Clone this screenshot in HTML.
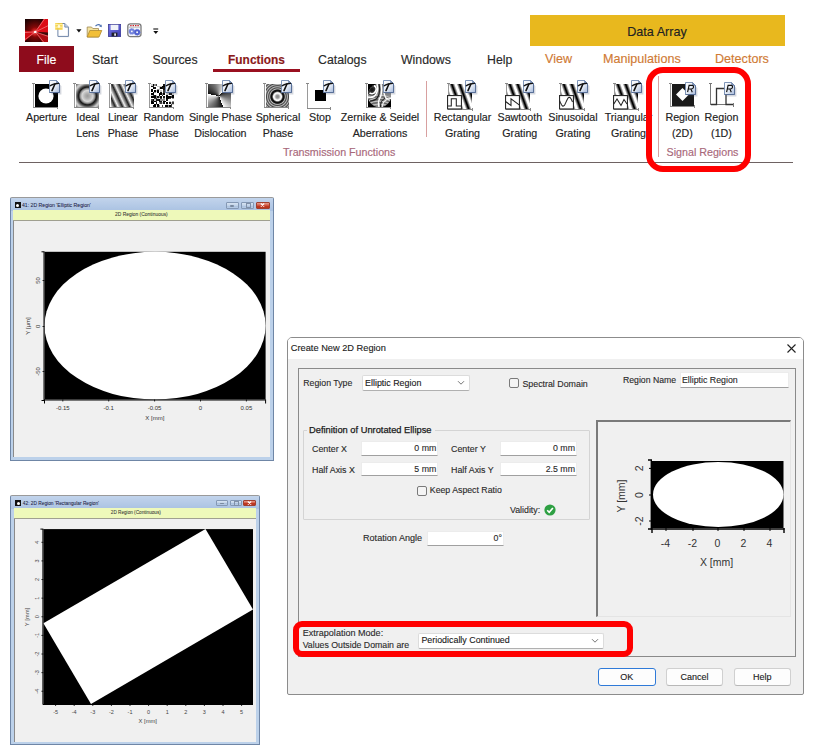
<!DOCTYPE html>
<html><head><meta charset="utf-8"><style>
html,body{margin:0;padding:0;}
body{width:814px;height:754px;position:relative;overflow:hidden;background:#fff;font-family:"Liberation Sans",sans-serif;}
.a{position:absolute;}
.t{position:absolute;white-space:nowrap;}
.t{-webkit-text-stroke:0.15px currentColor;}
.sm{-webkit-text-stroke:0.05px currentColor !important;}
.dl .t{-webkit-text-stroke:0.12px currentColor;}
svg{display:block;}
</style></head><body>
<svg width="0" height="0" style="position:absolute"><defs><linearGradient id="bg" x1="0" y1="0" x2="1" y2="1"><stop offset="0" stop-color="#ffffff"/><stop offset="0.55" stop-color="#e4ebf6"/><stop offset="1" stop-color="#a4b8da"/></linearGradient></defs></svg>
<svg class="a" style="left:24.8px;top:18.8px" width="23.5" height="23.5" viewBox="0 0 23.5 23.5">
<defs><radialGradient id="lg" cx="0.44" cy="0.55" r="0.75"><stop offset="0" stop-color="#e01818"/><stop offset="0.3" stop-color="#800808"/><stop offset="0.75" stop-color="#2a0404"/><stop offset="1" stop-color="#0a0000"/></radialGradient>
<radialGradient id="lg2" cx="0.44" cy="0.55" r="0.5"><stop offset="0" stop-color="#fff" stop-opacity="0.9"/><stop offset="0.25" stop-color="#ff8080" stop-opacity="0.4"/><stop offset="1" stop-color="#f00" stop-opacity="0"/></radialGradient></defs>
<rect width="23.5" height="23.5" fill="url(#lg)"/>
<path d="M10.3 12.9 L18.5 0 L23.5 0 L23.5 14 Z" fill="#dc0c16"/>
<path d="M10.3 12.9 L0 11.5 L0 22 Z" fill="#d00a14"/>
<path d="M10.3 12.9 L23.5 16.5 L23.5 23.5 L17.5 23.5 Z" fill="#b00a10"/>
<path d="M10.3 12.9 L23.5 13.5 L23.5 16 Z" fill="#3a0a08"/>
<path d="M10.3 12.9 L19.5 0 M10.3 12.9 L23.5 6.5 M10.3 12.9 L0 20.5 M10.3 12.9 L23.5 17.5 M10.3 12.9 L19 23.5 M10.3 12.9 L0 13.5" stroke="#ffb0b0" stroke-width="0.7" opacity="0.75"/>
<circle cx="10.3" cy="12.9" r="5" fill="url(#lg2)"/>
<circle cx="10.3" cy="12.9" r="1.2" fill="#fff"/>
</svg>
<svg class="a" style="left:54px;top:22px" width="17" height="17" viewBox="0 0 17 17">
<path d="M4 1.5 H11 L14.5 5 V14.5 H4 Z" fill="#000" opacity="0.12" transform="translate(0.7,0.7)"/>
<path d="M3.9 1.5 H10.8 L14.4 5.1 V14.4 H3.9 Z" fill="#fff" stroke="#6f86a8" stroke-width="1"/>
<path d="M10.8 1.5 V5.1 H14.4" fill="#c8d4e8" stroke="#6f86a8" stroke-width="0.9"/>
<rect x="1.2" y="1" width="7.4" height="6.8" fill="#f6d040" opacity="0.9"/>
<path d="M1.2 2.6 H8.6 M1.2 5.2 H8.6" stroke="#fff4b0" stroke-width="0.9"/>
<circle cx="4.9" cy="4.4" r="1.3" fill="#fffbe0"/>
</svg>
<svg class="a" style="left:75.5px;top:28.5px" width="6" height="4"><path d="M0.3 0.3 H5.5 L2.9 3.5 Z" fill="#111"/></svg>
<svg class="a" style="left:86px;top:22.5px" width="17" height="15" viewBox="0 0 17 15">
<path d="M1.2 4 H5.5 L6.8 5.5 H12.5 V14 H1.2 Z" fill="#f3e3a0" stroke="#a08850" stroke-width="0.8"/>
<path d="M1.2 14 L3.8 7.5 H15.8 L13 14 Z" fill="#f2bf38" stroke="#b08a30" stroke-width="0.8"/>
<path d="M9.5 3.2 Q12 0.3 14.8 2.6" fill="none" stroke="#4a70b0" stroke-width="1.2"/>
<path d="M13.2 3.6 L15.8 4.2 L15.6 1.6 Z" fill="#4a70b0"/>
</svg>
<svg class="a" style="left:108px;top:24px" width="13.3" height="13" viewBox="0 0 13.3 13">
<defs><linearGradient id="fl" x1="0" y1="0" x2="1" y2="1"><stop offset="0" stop-color="#7a7aea"/><stop offset="1" stop-color="#3a3ab0"/></linearGradient></defs>
<rect x="0.4" y="0.4" width="12.5" height="12.2" fill="url(#fl)" stroke="#3a3a90" stroke-width="0.8"/>
<rect x="2.6" y="0.8" width="7.8" height="5.2" fill="#f0f2f8"/>
<rect x="3.6" y="8.6" width="5.8" height="3.8" fill="#202028"/>
<rect x="6.2" y="9.4" width="1.8" height="2.4" fill="#dde"/>
</svg>
<svg class="a" style="left:127px;top:23px" width="15" height="14.5" viewBox="0 0 15 14.5">
<rect x="0.8" y="0.8" width="13.2" height="12.8" rx="2.5" fill="#f4f6fc" stroke="#7a7a7a" stroke-width="1.3"/>
<path d="M3.2 2.6 H4.6 M5.6 2.6 H7 M8 2.6 H9.4 M10.4 2.6 H11.8" stroke="#d02020" stroke-width="1.4"/>
<path d="M1.6 4.2 H13.2" stroke="#999" stroke-width="0.6"/>
<circle cx="4.8" cy="8.4" r="2.9" fill="#7080dc" stroke="#8a96e0" stroke-width="1" stroke-dasharray="0.9 0.9"/>
<circle cx="4.8" cy="8.4" r="0.9" fill="#f4f6fc"/>
<circle cx="10.1" cy="9.3" r="3" fill="#5060d0" stroke="#7080d8" stroke-width="1" stroke-dasharray="0.9 0.9"/>
<circle cx="10.1" cy="9.3" r="1" fill="#f4f6fc"/>
</svg>
<svg class="a" style="left:153px;top:27.5px" width="6" height="6.5"><path d="M0.3 1 H5.2" stroke="#111" stroke-width="1.1"/><path d="M0.3 3 H5.3 L2.8 5.9 Z" fill="#111"/></svg>
<div class="a" style="left:530px;top:15px;width:255px;height:31px;background:#e8b81e;"></div>
<div class="t" style="top:25.83px;font-size:12.6px;line-height:12.6px;color:#222;left:507.00px;width:300px;text-align:center;">Data Array</div>
<div class="a" style="left:19px;top:46px;width:55px;height:26px;background:#8e0c1c;"></div>
<div class="t" style="top:53.59px;font-size:12.3px;line-height:12.3px;color:#fff;left:-103.50px;width:300px;text-align:center;">File</div>
<div class="t" style="top:53.59px;font-size:12.3px;line-height:12.3px;color:#2a2a2a;left:92.00px;">Start</div>
<div class="t" style="top:53.59px;font-size:12.3px;line-height:12.3px;color:#2a2a2a;left:152.50px;">Sources</div>
<div class="t" style="top:53.59px;font-size:12.3px;line-height:12.3px;color:#2a2a2a;left:318.00px;">Catalogs</div>
<div class="t" style="top:53.59px;font-size:12.3px;line-height:12.3px;color:#2a2a2a;left:401.00px;">Windows</div>
<div class="t" style="top:53.59px;font-size:12.3px;line-height:12.3px;color:#2a2a2a;left:487.00px;">Help</div>
<div class="t" style="top:54.53px;font-size:11.9px;line-height:11.9px;color:#8b1a1a;font-weight:bold;left:106.50px;width:300px;text-align:center;">Functions</div>
<div class="a" style="left:213px;top:69px;width:87px;height:3px;background:#9a1020;"></div>
<div class="t" style="top:53.33px;font-size:12.6px;line-height:12.6px;color:#d07a35;left:545.00px;">View</div>
<div class="t" style="top:53.33px;font-size:12.6px;line-height:12.6px;color:#d07a35;left:603.00px;">Manipulations</div>
<div class="t" style="top:53.33px;font-size:12.6px;line-height:12.6px;color:#d07a35;left:715.00px;">Detectors</div>
<div class="t" style="top:111.94px;font-size:10.7px;line-height:10.7px;color:#222;left:-103.50px;width:300px;text-align:center;">Aperture</div>
<div class="t" style="top:111.94px;font-size:10.7px;line-height:10.7px;color:#222;left:-62.20px;width:300px;text-align:center;">Ideal</div>
<div class="t" style="top:127.94px;font-size:10.7px;line-height:10.7px;color:#222;left:-62.20px;width:300px;text-align:center;">Lens</div>
<div class="t" style="top:111.94px;font-size:10.7px;line-height:10.7px;color:#222;left:-27.20px;width:300px;text-align:center;">Linear</div>
<div class="t" style="top:127.94px;font-size:10.7px;line-height:10.7px;color:#222;left:-27.20px;width:300px;text-align:center;">Phase</div>
<div class="t" style="top:111.94px;font-size:10.7px;line-height:10.7px;color:#222;left:13.60px;width:300px;text-align:center;">Random</div>
<div class="t" style="top:127.94px;font-size:10.7px;line-height:10.7px;color:#222;left:13.60px;width:300px;text-align:center;">Phase</div>
<div class="t" style="top:111.94px;font-size:10.7px;line-height:10.7px;color:#222;left:70.40px;width:300px;text-align:center;">Single Phase</div>
<div class="t" style="top:127.94px;font-size:10.7px;line-height:10.7px;color:#222;left:70.40px;width:300px;text-align:center;">Dislocation</div>
<div class="t" style="top:111.94px;font-size:10.7px;line-height:10.7px;color:#222;left:128.00px;width:300px;text-align:center;">Spherical</div>
<div class="t" style="top:127.94px;font-size:10.7px;line-height:10.7px;color:#222;left:128.00px;width:300px;text-align:center;">Phase</div>
<div class="t" style="top:111.94px;font-size:10.7px;line-height:10.7px;color:#222;left:170.00px;width:300px;text-align:center;">Stop</div>
<div class="t" style="top:111.94px;font-size:10.7px;line-height:10.7px;color:#222;left:230.00px;width:300px;text-align:center;">Zernike &amp; Seidel</div>
<div class="t" style="top:127.94px;font-size:10.7px;line-height:10.7px;color:#222;left:230.00px;width:300px;text-align:center;">Aberrations</div>
<div class="t" style="top:111.94px;font-size:10.7px;line-height:10.7px;color:#222;left:312.50px;width:300px;text-align:center;">Rectangular</div>
<div class="t" style="top:127.94px;font-size:10.7px;line-height:10.7px;color:#222;left:312.50px;width:300px;text-align:center;">Grating</div>
<div class="t" style="top:111.94px;font-size:10.7px;line-height:10.7px;color:#222;left:369.80px;width:300px;text-align:center;">Sawtooth</div>
<div class="t" style="top:127.94px;font-size:10.7px;line-height:10.7px;color:#222;left:369.80px;width:300px;text-align:center;">Grating</div>
<div class="t" style="top:111.94px;font-size:10.7px;line-height:10.7px;color:#222;left:423.00px;width:300px;text-align:center;">Sinusoidal</div>
<div class="t" style="top:127.94px;font-size:10.7px;line-height:10.7px;color:#222;left:423.00px;width:300px;text-align:center;">Grating</div>
<div class="t" style="top:111.94px;font-size:10.7px;line-height:10.7px;color:#222;left:478.50px;width:300px;text-align:center;">Triangular</div>
<div class="t" style="top:127.94px;font-size:10.7px;line-height:10.7px;color:#222;left:478.50px;width:300px;text-align:center;">Grating</div>
<div class="t" style="top:111.94px;font-size:10.7px;line-height:10.7px;color:#222;left:532.40px;width:300px;text-align:center;">Region</div>
<div class="t" style="top:127.94px;font-size:10.7px;line-height:10.7px;color:#222;left:532.40px;width:300px;text-align:center;">(2D)</div>
<div class="t" style="top:111.94px;font-size:10.7px;line-height:10.7px;color:#222;left:571.50px;width:300px;text-align:center;">Region</div>
<div class="t" style="top:127.94px;font-size:10.7px;line-height:10.7px;color:#222;left:571.50px;width:300px;text-align:center;">(1D)</div>
<div class="t" style="top:147.24px;font-size:10.7px;line-height:10.7px;color:#a8687a;left:189.20px;width:300px;text-align:center;">Transmission Functions</div>
<div class="t" style="top:147.24px;font-size:10.7px;line-height:10.7px;color:#a8687a;left:552.50px;width:300px;text-align:center;">Signal Regions</div>
<div class="a" style="left:426px;top:81px;width:1px;height:56px;background:#d8a0a0;"></div>
<div class="a" style="left:658px;top:76px;width:1px;height:81px;background:#d8a0a0;"></div>
<div class="a" style="left:19px;top:162px;width:774px;height:1px;background:#6e6262;"></div>
<div class="a" style="left:33px;top:83px;width:1px;height:24px;background:#9a9a9a;"></div><div class="a" style="left:32px;top:83px;width:3px;height:1px;background:#888;"></div><div class="a" style="left:33px;top:107px;width:25px;height:1px;background:#888;"></div><div class="a" style="left:57px;top:106px;width:1px;height:3px;background:#888;"></div>
<svg class="a" style="left:34.5px;top:84px" width="23" height="23"><rect width="23" height="23" fill="#000"/><circle cx="11" cy="12" r="7.6" fill="#fff"/></svg>
<svg class="a" style="left:48.5px;top:80px" width="13" height="15" viewBox="0 0 13 15">
<path d="M1.5 1.5 H8 L11.5 5 V13.5 H1.5 Z" fill="#3a4a68" opacity="0.22" transform="translate(0.9,0.9)"/>
<path d="M0.5 0.5 H7.5 L10.5 3.5 V12.5 H0.5 Z" fill="url(#bg)" stroke="#7189b0" stroke-width="0.9"/>
<path d="M0.5 12.5 H10.5 V3.5" fill="none" stroke="#566c94" stroke-width="0.9"/>
<path d="M7.5 0.5 L10.5 3.5 H7.5 Z" fill="#7a92b8" stroke="#6a80a8" stroke-width="0.6"/>
<path d="M1.2 5.8 Q4 3.7 9.6 3.4" stroke="#111" stroke-width="1.25" fill="none" stroke-linecap="round"/><path d="M5.9 4 Q4.6 7.2 3 10.6" stroke="#111" stroke-width="1.6" fill="none" stroke-linecap="round"/></svg>
<div class="a" style="left:74px;top:83px;width:1px;height:24px;background:#9a9a9a;"></div><div class="a" style="left:73px;top:83px;width:3px;height:1px;background:#888;"></div><div class="a" style="left:74px;top:107px;width:25px;height:1px;background:#888;"></div><div class="a" style="left:98px;top:106px;width:1px;height:3px;background:#888;"></div>
<div class="a" style="left:75.5px;top:84px;width:23px;height:23px;background:radial-gradient(circle at 50% 52%,#9a9a9a 0,#b0b0b0 2.5px,#d8d8d8 5.5px,#909090 7.3px,#181818 8.8px,#404040 10px,#c0c0c0 12.5px,#d0d0d0 13.5px,#707070 16px);"></div>
<svg class="a" style="left:88.5px;top:80px" width="13" height="15" viewBox="0 0 13 15">
<path d="M1.5 1.5 H8 L11.5 5 V13.5 H1.5 Z" fill="#3a4a68" opacity="0.22" transform="translate(0.9,0.9)"/>
<path d="M0.5 0.5 H7.5 L10.5 3.5 V12.5 H0.5 Z" fill="url(#bg)" stroke="#7189b0" stroke-width="0.9"/>
<path d="M0.5 12.5 H10.5 V3.5" fill="none" stroke="#566c94" stroke-width="0.9"/>
<path d="M7.5 0.5 L10.5 3.5 H7.5 Z" fill="#7a92b8" stroke="#6a80a8" stroke-width="0.6"/>
<path d="M1.2 5.8 Q4 3.7 9.6 3.4" stroke="#111" stroke-width="1.25" fill="none" stroke-linecap="round"/><path d="M5.9 4 Q4.6 7.2 3 10.6" stroke="#111" stroke-width="1.6" fill="none" stroke-linecap="round"/></svg>
<div class="a" style="left:109px;top:83px;width:1px;height:24px;background:#9a9a9a;"></div><div class="a" style="left:108px;top:83px;width:3px;height:1px;background:#888;"></div><div class="a" style="left:109px;top:107px;width:25px;height:1px;background:#888;"></div><div class="a" style="left:133px;top:106px;width:1px;height:3px;background:#888;"></div>
<div class="a" style="left:110.5px;top:84px;width:23px;height:23px;background:repeating-linear-gradient(65deg,#f0f0f0 0px,#222 4px,#f0f0f0 6.5px);"></div>
<svg class="a" style="left:124.5px;top:80px" width="13" height="15" viewBox="0 0 13 15">
<path d="M1.5 1.5 H8 L11.5 5 V13.5 H1.5 Z" fill="#3a4a68" opacity="0.22" transform="translate(0.9,0.9)"/>
<path d="M0.5 0.5 H7.5 L10.5 3.5 V12.5 H0.5 Z" fill="url(#bg)" stroke="#7189b0" stroke-width="0.9"/>
<path d="M0.5 12.5 H10.5 V3.5" fill="none" stroke="#566c94" stroke-width="0.9"/>
<path d="M7.5 0.5 L10.5 3.5 H7.5 Z" fill="#7a92b8" stroke="#6a80a8" stroke-width="0.6"/>
<path d="M1.2 5.8 Q4 3.7 9.6 3.4" stroke="#111" stroke-width="1.25" fill="none" stroke-linecap="round"/><path d="M5.9 4 Q4.6 7.2 3 10.6" stroke="#111" stroke-width="1.6" fill="none" stroke-linecap="round"/></svg>
<div class="a" style="left:149px;top:83px;width:1px;height:24px;background:#9a9a9a;"></div><div class="a" style="left:148px;top:83px;width:3px;height:1px;background:#888;"></div><div class="a" style="left:149px;top:107px;width:25px;height:1px;background:#888;"></div><div class="a" style="left:173px;top:106px;width:1px;height:3px;background:#888;"></div>
<svg class="a" style="left:150.5px;top:84px" width="23" height="23" shape-rendering="crispEdges"><rect x="0.00" y="0.00" width="1.83" height="1.83" fill="rgb(200,200,200)"/><rect x="0.00" y="1.53" width="1.83" height="1.83" fill="rgb(20,20,20)"/><rect x="0.00" y="3.07" width="1.83" height="1.83" fill="rgb(255,255,255)"/><rect x="0.00" y="4.60" width="1.83" height="1.83" fill="rgb(0,0,0)"/><rect x="0.00" y="6.13" width="1.83" height="1.83" fill="rgb(0,0,0)"/><rect x="0.00" y="7.67" width="1.83" height="1.83" fill="rgb(255,255,255)"/><rect x="0.00" y="9.20" width="1.83" height="1.83" fill="rgb(0,0,0)"/><rect x="0.00" y="10.73" width="1.83" height="1.83" fill="rgb(200,200,200)"/><rect x="0.00" y="12.27" width="1.83" height="1.83" fill="rgb(0,0,0)"/><rect x="0.00" y="13.80" width="1.83" height="1.83" fill="rgb(255,255,255)"/><rect x="0.00" y="15.33" width="1.83" height="1.83" fill="rgb(60,60,60)"/><rect x="0.00" y="16.87" width="1.83" height="1.83" fill="rgb(0,0,0)"/><rect x="0.00" y="18.40" width="1.83" height="1.83" fill="rgb(0,0,0)"/><rect x="0.00" y="19.93" width="1.83" height="1.83" fill="rgb(255,255,255)"/><rect x="0.00" y="21.47" width="1.83" height="1.83" fill="rgb(255,255,255)"/><rect x="1.53" y="0.00" width="1.83" height="1.83" fill="rgb(0,0,0)"/><rect x="1.53" y="1.53" width="1.83" height="1.83" fill="rgb(60,60,60)"/><rect x="1.53" y="3.07" width="1.83" height="1.83" fill="rgb(0,0,0)"/><rect x="1.53" y="4.60" width="1.83" height="1.83" fill="rgb(255,255,255)"/><rect x="1.53" y="6.13" width="1.83" height="1.83" fill="rgb(255,255,255)"/><rect x="1.53" y="7.67" width="1.83" height="1.83" fill="rgb(0,0,0)"/><rect x="1.53" y="9.20" width="1.83" height="1.83" fill="rgb(0,0,0)"/><rect x="1.53" y="10.73" width="1.83" height="1.83" fill="rgb(60,60,60)"/><rect x="1.53" y="12.27" width="1.83" height="1.83" fill="rgb(0,0,0)"/><rect x="1.53" y="13.80" width="1.83" height="1.83" fill="rgb(255,255,255)"/><rect x="1.53" y="15.33" width="1.83" height="1.83" fill="rgb(0,0,0)"/><rect x="1.53" y="16.87" width="1.83" height="1.83" fill="rgb(60,60,60)"/><rect x="1.53" y="18.40" width="1.83" height="1.83" fill="rgb(0,0,0)"/><rect x="1.53" y="19.93" width="1.83" height="1.83" fill="rgb(255,255,255)"/><rect x="1.53" y="21.47" width="1.83" height="1.83" fill="rgb(20,20,20)"/><rect x="3.07" y="0.00" width="1.83" height="1.83" fill="rgb(140,140,140)"/><rect x="3.07" y="1.53" width="1.83" height="1.83" fill="rgb(255,255,255)"/><rect x="3.07" y="3.07" width="1.83" height="1.83" fill="rgb(20,20,20)"/><rect x="3.07" y="4.60" width="1.83" height="1.83" fill="rgb(255,255,255)"/><rect x="3.07" y="6.13" width="1.83" height="1.83" fill="rgb(0,0,0)"/><rect x="3.07" y="7.67" width="1.83" height="1.83" fill="rgb(140,140,140)"/><rect x="3.07" y="9.20" width="1.83" height="1.83" fill="rgb(255,255,255)"/><rect x="3.07" y="10.73" width="1.83" height="1.83" fill="rgb(20,20,20)"/><rect x="3.07" y="12.27" width="1.83" height="1.83" fill="rgb(0,0,0)"/><rect x="3.07" y="13.80" width="1.83" height="1.83" fill="rgb(60,60,60)"/><rect x="3.07" y="15.33" width="1.83" height="1.83" fill="rgb(200,200,200)"/><rect x="3.07" y="16.87" width="1.83" height="1.83" fill="rgb(0,0,0)"/><rect x="3.07" y="18.40" width="1.83" height="1.83" fill="rgb(255,255,255)"/><rect x="3.07" y="19.93" width="1.83" height="1.83" fill="rgb(0,0,0)"/><rect x="3.07" y="21.47" width="1.83" height="1.83" fill="rgb(0,0,0)"/><rect x="4.60" y="0.00" width="1.83" height="1.83" fill="rgb(60,60,60)"/><rect x="4.60" y="1.53" width="1.83" height="1.83" fill="rgb(255,255,255)"/><rect x="4.60" y="3.07" width="1.83" height="1.83" fill="rgb(255,255,255)"/><rect x="4.60" y="4.60" width="1.83" height="1.83" fill="rgb(255,255,255)"/><rect x="4.60" y="6.13" width="1.83" height="1.83" fill="rgb(200,200,200)"/><rect x="4.60" y="7.67" width="1.83" height="1.83" fill="rgb(255,255,255)"/><rect x="4.60" y="9.20" width="1.83" height="1.83" fill="rgb(255,255,255)"/><rect x="4.60" y="10.73" width="1.83" height="1.83" fill="rgb(200,200,200)"/><rect x="4.60" y="12.27" width="1.83" height="1.83" fill="rgb(140,140,140)"/><rect x="4.60" y="13.80" width="1.83" height="1.83" fill="rgb(60,60,60)"/><rect x="4.60" y="15.33" width="1.83" height="1.83" fill="rgb(20,20,20)"/><rect x="4.60" y="16.87" width="1.83" height="1.83" fill="rgb(60,60,60)"/><rect x="4.60" y="18.40" width="1.83" height="1.83" fill="rgb(0,0,0)"/><rect x="4.60" y="19.93" width="1.83" height="1.83" fill="rgb(140,140,140)"/><rect x="4.60" y="21.47" width="1.83" height="1.83" fill="rgb(255,255,255)"/><rect x="6.13" y="0.00" width="1.83" height="1.83" fill="rgb(255,255,255)"/><rect x="6.13" y="1.53" width="1.83" height="1.83" fill="rgb(200,200,200)"/><rect x="6.13" y="3.07" width="1.83" height="1.83" fill="rgb(255,255,255)"/><rect x="6.13" y="4.60" width="1.83" height="1.83" fill="rgb(140,140,140)"/><rect x="6.13" y="6.13" width="1.83" height="1.83" fill="rgb(0,0,0)"/><rect x="6.13" y="7.67" width="1.83" height="1.83" fill="rgb(0,0,0)"/><rect x="6.13" y="9.20" width="1.83" height="1.83" fill="rgb(255,255,255)"/><rect x="6.13" y="10.73" width="1.83" height="1.83" fill="rgb(255,255,255)"/><rect x="6.13" y="12.27" width="1.83" height="1.83" fill="rgb(20,20,20)"/><rect x="6.13" y="13.80" width="1.83" height="1.83" fill="rgb(200,200,200)"/><rect x="6.13" y="15.33" width="1.83" height="1.83" fill="rgb(20,20,20)"/><rect x="6.13" y="16.87" width="1.83" height="1.83" fill="rgb(255,255,255)"/><rect x="6.13" y="18.40" width="1.83" height="1.83" fill="rgb(255,255,255)"/><rect x="6.13" y="19.93" width="1.83" height="1.83" fill="rgb(0,0,0)"/><rect x="6.13" y="21.47" width="1.83" height="1.83" fill="rgb(0,0,0)"/><rect x="7.67" y="0.00" width="1.83" height="1.83" fill="rgb(255,255,255)"/><rect x="7.67" y="1.53" width="1.83" height="1.83" fill="rgb(200,200,200)"/><rect x="7.67" y="3.07" width="1.83" height="1.83" fill="rgb(200,200,200)"/><rect x="7.67" y="4.60" width="1.83" height="1.83" fill="rgb(200,200,200)"/><rect x="7.67" y="6.13" width="1.83" height="1.83" fill="rgb(255,255,255)"/><rect x="7.67" y="7.67" width="1.83" height="1.83" fill="rgb(255,255,255)"/><rect x="7.67" y="9.20" width="1.83" height="1.83" fill="rgb(0,0,0)"/><rect x="7.67" y="10.73" width="1.83" height="1.83" fill="rgb(0,0,0)"/><rect x="7.67" y="12.27" width="1.83" height="1.83" fill="rgb(140,140,140)"/><rect x="7.67" y="13.80" width="1.83" height="1.83" fill="rgb(255,255,255)"/><rect x="7.67" y="15.33" width="1.83" height="1.83" fill="rgb(0,0,0)"/><rect x="7.67" y="16.87" width="1.83" height="1.83" fill="rgb(0,0,0)"/><rect x="7.67" y="18.40" width="1.83" height="1.83" fill="rgb(140,140,140)"/><rect x="7.67" y="19.93" width="1.83" height="1.83" fill="rgb(255,255,255)"/><rect x="7.67" y="21.47" width="1.83" height="1.83" fill="rgb(140,140,140)"/><rect x="9.20" y="0.00" width="1.83" height="1.83" fill="rgb(255,255,255)"/><rect x="9.20" y="1.53" width="1.83" height="1.83" fill="rgb(200,200,200)"/><rect x="9.20" y="3.07" width="1.83" height="1.83" fill="rgb(0,0,0)"/><rect x="9.20" y="4.60" width="1.83" height="1.83" fill="rgb(255,255,255)"/><rect x="9.20" y="6.13" width="1.83" height="1.83" fill="rgb(200,200,200)"/><rect x="9.20" y="7.67" width="1.83" height="1.83" fill="rgb(20,20,20)"/><rect x="9.20" y="9.20" width="1.83" height="1.83" fill="rgb(0,0,0)"/><rect x="9.20" y="10.73" width="1.83" height="1.83" fill="rgb(255,255,255)"/><rect x="9.20" y="12.27" width="1.83" height="1.83" fill="rgb(0,0,0)"/><rect x="9.20" y="13.80" width="1.83" height="1.83" fill="rgb(60,60,60)"/><rect x="9.20" y="15.33" width="1.83" height="1.83" fill="rgb(140,140,140)"/><rect x="9.20" y="16.87" width="1.83" height="1.83" fill="rgb(20,20,20)"/><rect x="9.20" y="18.40" width="1.83" height="1.83" fill="rgb(60,60,60)"/><rect x="9.20" y="19.93" width="1.83" height="1.83" fill="rgb(255,255,255)"/><rect x="9.20" y="21.47" width="1.83" height="1.83" fill="rgb(255,255,255)"/><rect x="10.73" y="0.00" width="1.83" height="1.83" fill="rgb(255,255,255)"/><rect x="10.73" y="1.53" width="1.83" height="1.83" fill="rgb(0,0,0)"/><rect x="10.73" y="3.07" width="1.83" height="1.83" fill="rgb(20,20,20)"/><rect x="10.73" y="4.60" width="1.83" height="1.83" fill="rgb(255,255,255)"/><rect x="10.73" y="6.13" width="1.83" height="1.83" fill="rgb(255,255,255)"/><rect x="10.73" y="7.67" width="1.83" height="1.83" fill="rgb(255,255,255)"/><rect x="10.73" y="9.20" width="1.83" height="1.83" fill="rgb(140,140,140)"/><rect x="10.73" y="10.73" width="1.83" height="1.83" fill="rgb(20,20,20)"/><rect x="10.73" y="12.27" width="1.83" height="1.83" fill="rgb(255,255,255)"/><rect x="10.73" y="13.80" width="1.83" height="1.83" fill="rgb(255,255,255)"/><rect x="10.73" y="15.33" width="1.83" height="1.83" fill="rgb(140,140,140)"/><rect x="10.73" y="16.87" width="1.83" height="1.83" fill="rgb(255,255,255)"/><rect x="10.73" y="18.40" width="1.83" height="1.83" fill="rgb(200,200,200)"/><rect x="10.73" y="19.93" width="1.83" height="1.83" fill="rgb(255,255,255)"/><rect x="10.73" y="21.47" width="1.83" height="1.83" fill="rgb(60,60,60)"/><rect x="12.27" y="0.00" width="1.83" height="1.83" fill="rgb(20,20,20)"/><rect x="12.27" y="1.53" width="1.83" height="1.83" fill="rgb(0,0,0)"/><rect x="12.27" y="3.07" width="1.83" height="1.83" fill="rgb(20,20,20)"/><rect x="12.27" y="4.60" width="1.83" height="1.83" fill="rgb(20,20,20)"/><rect x="12.27" y="6.13" width="1.83" height="1.83" fill="rgb(60,60,60)"/><rect x="12.27" y="7.67" width="1.83" height="1.83" fill="rgb(60,60,60)"/><rect x="12.27" y="9.20" width="1.83" height="1.83" fill="rgb(0,0,0)"/><rect x="12.27" y="10.73" width="1.83" height="1.83" fill="rgb(255,255,255)"/><rect x="12.27" y="12.27" width="1.83" height="1.83" fill="rgb(20,20,20)"/><rect x="12.27" y="13.80" width="1.83" height="1.83" fill="rgb(140,140,140)"/><rect x="12.27" y="15.33" width="1.83" height="1.83" fill="rgb(140,140,140)"/><rect x="12.27" y="16.87" width="1.83" height="1.83" fill="rgb(0,0,0)"/><rect x="12.27" y="18.40" width="1.83" height="1.83" fill="rgb(20,20,20)"/><rect x="12.27" y="19.93" width="1.83" height="1.83" fill="rgb(255,255,255)"/><rect x="12.27" y="21.47" width="1.83" height="1.83" fill="rgb(255,255,255)"/><rect x="13.80" y="0.00" width="1.83" height="1.83" fill="rgb(200,200,200)"/><rect x="13.80" y="1.53" width="1.83" height="1.83" fill="rgb(200,200,200)"/><rect x="13.80" y="3.07" width="1.83" height="1.83" fill="rgb(20,20,20)"/><rect x="13.80" y="4.60" width="1.83" height="1.83" fill="rgb(255,255,255)"/><rect x="13.80" y="6.13" width="1.83" height="1.83" fill="rgb(0,0,0)"/><rect x="13.80" y="7.67" width="1.83" height="1.83" fill="rgb(255,255,255)"/><rect x="13.80" y="9.20" width="1.83" height="1.83" fill="rgb(255,255,255)"/><rect x="13.80" y="10.73" width="1.83" height="1.83" fill="rgb(255,255,255)"/><rect x="13.80" y="12.27" width="1.83" height="1.83" fill="rgb(255,255,255)"/><rect x="13.80" y="13.80" width="1.83" height="1.83" fill="rgb(255,255,255)"/><rect x="13.80" y="15.33" width="1.83" height="1.83" fill="rgb(255,255,255)"/><rect x="13.80" y="16.87" width="1.83" height="1.83" fill="rgb(0,0,0)"/><rect x="13.80" y="18.40" width="1.83" height="1.83" fill="rgb(255,255,255)"/><rect x="13.80" y="19.93" width="1.83" height="1.83" fill="rgb(255,255,255)"/><rect x="13.80" y="21.47" width="1.83" height="1.83" fill="rgb(0,0,0)"/><rect x="15.33" y="0.00" width="1.83" height="1.83" fill="rgb(60,60,60)"/><rect x="15.33" y="1.53" width="1.83" height="1.83" fill="rgb(0,0,0)"/><rect x="15.33" y="3.07" width="1.83" height="1.83" fill="rgb(60,60,60)"/><rect x="15.33" y="4.60" width="1.83" height="1.83" fill="rgb(255,255,255)"/><rect x="15.33" y="6.13" width="1.83" height="1.83" fill="rgb(20,20,20)"/><rect x="15.33" y="7.67" width="1.83" height="1.83" fill="rgb(0,0,0)"/><rect x="15.33" y="9.20" width="1.83" height="1.83" fill="rgb(200,200,200)"/><rect x="15.33" y="10.73" width="1.83" height="1.83" fill="rgb(0,0,0)"/><rect x="15.33" y="12.27" width="1.83" height="1.83" fill="rgb(0,0,0)"/><rect x="15.33" y="13.80" width="1.83" height="1.83" fill="rgb(0,0,0)"/><rect x="15.33" y="15.33" width="1.83" height="1.83" fill="rgb(20,20,20)"/><rect x="15.33" y="16.87" width="1.83" height="1.83" fill="rgb(255,255,255)"/><rect x="15.33" y="18.40" width="1.83" height="1.83" fill="rgb(0,0,0)"/><rect x="15.33" y="19.93" width="1.83" height="1.83" fill="rgb(200,200,200)"/><rect x="15.33" y="21.47" width="1.83" height="1.83" fill="rgb(0,0,0)"/><rect x="16.87" y="0.00" width="1.83" height="1.83" fill="rgb(0,0,0)"/><rect x="16.87" y="1.53" width="1.83" height="1.83" fill="rgb(60,60,60)"/><rect x="16.87" y="3.07" width="1.83" height="1.83" fill="rgb(255,255,255)"/><rect x="16.87" y="4.60" width="1.83" height="1.83" fill="rgb(20,20,20)"/><rect x="16.87" y="6.13" width="1.83" height="1.83" fill="rgb(140,140,140)"/><rect x="16.87" y="7.67" width="1.83" height="1.83" fill="rgb(200,200,200)"/><rect x="16.87" y="9.20" width="1.83" height="1.83" fill="rgb(200,200,200)"/><rect x="16.87" y="10.73" width="1.83" height="1.83" fill="rgb(255,255,255)"/><rect x="16.87" y="12.27" width="1.83" height="1.83" fill="rgb(0,0,0)"/><rect x="16.87" y="13.80" width="1.83" height="1.83" fill="rgb(0,0,0)"/><rect x="16.87" y="15.33" width="1.83" height="1.83" fill="rgb(255,255,255)"/><rect x="16.87" y="16.87" width="1.83" height="1.83" fill="rgb(255,255,255)"/><rect x="16.87" y="18.40" width="1.83" height="1.83" fill="rgb(255,255,255)"/><rect x="16.87" y="19.93" width="1.83" height="1.83" fill="rgb(255,255,255)"/><rect x="16.87" y="21.47" width="1.83" height="1.83" fill="rgb(140,140,140)"/><rect x="18.40" y="0.00" width="1.83" height="1.83" fill="rgb(0,0,0)"/><rect x="18.40" y="1.53" width="1.83" height="1.83" fill="rgb(20,20,20)"/><rect x="18.40" y="3.07" width="1.83" height="1.83" fill="rgb(0,0,0)"/><rect x="18.40" y="4.60" width="1.83" height="1.83" fill="rgb(200,200,200)"/><rect x="18.40" y="6.13" width="1.83" height="1.83" fill="rgb(140,140,140)"/><rect x="18.40" y="7.67" width="1.83" height="1.83" fill="rgb(255,255,255)"/><rect x="18.40" y="9.20" width="1.83" height="1.83" fill="rgb(20,20,20)"/><rect x="18.40" y="10.73" width="1.83" height="1.83" fill="rgb(255,255,255)"/><rect x="18.40" y="12.27" width="1.83" height="1.83" fill="rgb(0,0,0)"/><rect x="18.40" y="13.80" width="1.83" height="1.83" fill="rgb(60,60,60)"/><rect x="18.40" y="15.33" width="1.83" height="1.83" fill="rgb(255,255,255)"/><rect x="18.40" y="16.87" width="1.83" height="1.83" fill="rgb(200,200,200)"/><rect x="18.40" y="18.40" width="1.83" height="1.83" fill="rgb(20,20,20)"/><rect x="18.40" y="19.93" width="1.83" height="1.83" fill="rgb(255,255,255)"/><rect x="18.40" y="21.47" width="1.83" height="1.83" fill="rgb(0,0,0)"/><rect x="19.93" y="0.00" width="1.83" height="1.83" fill="rgb(255,255,255)"/><rect x="19.93" y="1.53" width="1.83" height="1.83" fill="rgb(140,140,140)"/><rect x="19.93" y="3.07" width="1.83" height="1.83" fill="rgb(0,0,0)"/><rect x="19.93" y="4.60" width="1.83" height="1.83" fill="rgb(140,140,140)"/><rect x="19.93" y="6.13" width="1.83" height="1.83" fill="rgb(255,255,255)"/><rect x="19.93" y="7.67" width="1.83" height="1.83" fill="rgb(200,200,200)"/><rect x="19.93" y="9.20" width="1.83" height="1.83" fill="rgb(20,20,20)"/><rect x="19.93" y="10.73" width="1.83" height="1.83" fill="rgb(200,200,200)"/><rect x="19.93" y="12.27" width="1.83" height="1.83" fill="rgb(60,60,60)"/><rect x="19.93" y="13.80" width="1.83" height="1.83" fill="rgb(255,255,255)"/><rect x="19.93" y="15.33" width="1.83" height="1.83" fill="rgb(255,255,255)"/><rect x="19.93" y="16.87" width="1.83" height="1.83" fill="rgb(255,255,255)"/><rect x="19.93" y="18.40" width="1.83" height="1.83" fill="rgb(200,200,200)"/><rect x="19.93" y="19.93" width="1.83" height="1.83" fill="rgb(60,60,60)"/><rect x="19.93" y="21.47" width="1.83" height="1.83" fill="rgb(60,60,60)"/><rect x="21.47" y="0.00" width="1.83" height="1.83" fill="rgb(60,60,60)"/><rect x="21.47" y="1.53" width="1.83" height="1.83" fill="rgb(255,255,255)"/><rect x="21.47" y="3.07" width="1.83" height="1.83" fill="rgb(60,60,60)"/><rect x="21.47" y="4.60" width="1.83" height="1.83" fill="rgb(60,60,60)"/><rect x="21.47" y="6.13" width="1.83" height="1.83" fill="rgb(255,255,255)"/><rect x="21.47" y="7.67" width="1.83" height="1.83" fill="rgb(255,255,255)"/><rect x="21.47" y="9.20" width="1.83" height="1.83" fill="rgb(200,200,200)"/><rect x="21.47" y="10.73" width="1.83" height="1.83" fill="rgb(0,0,0)"/><rect x="21.47" y="12.27" width="1.83" height="1.83" fill="rgb(0,0,0)"/><rect x="21.47" y="13.80" width="1.83" height="1.83" fill="rgb(140,140,140)"/><rect x="21.47" y="15.33" width="1.83" height="1.83" fill="rgb(255,255,255)"/><rect x="21.47" y="16.87" width="1.83" height="1.83" fill="rgb(140,140,140)"/><rect x="21.47" y="18.40" width="1.83" height="1.83" fill="rgb(60,60,60)"/><rect x="21.47" y="19.93" width="1.83" height="1.83" fill="rgb(200,200,200)"/><rect x="21.47" y="21.47" width="1.83" height="1.83" fill="rgb(255,255,255)"/></svg>
<svg class="a" style="left:164.5px;top:80px" width="13" height="15" viewBox="0 0 13 15">
<path d="M1.5 1.5 H8 L11.5 5 V13.5 H1.5 Z" fill="#3a4a68" opacity="0.22" transform="translate(0.9,0.9)"/>
<path d="M0.5 0.5 H7.5 L10.5 3.5 V12.5 H0.5 Z" fill="url(#bg)" stroke="#7189b0" stroke-width="0.9"/>
<path d="M0.5 12.5 H10.5 V3.5" fill="none" stroke="#566c94" stroke-width="0.9"/>
<path d="M7.5 0.5 L10.5 3.5 H7.5 Z" fill="#7a92b8" stroke="#6a80a8" stroke-width="0.6"/>
<path d="M1.2 5.8 Q4 3.7 9.6 3.4" stroke="#111" stroke-width="1.25" fill="none" stroke-linecap="round"/><path d="M5.9 4 Q4.6 7.2 3 10.6" stroke="#111" stroke-width="1.6" fill="none" stroke-linecap="round"/></svg>
<div class="a" style="left:206px;top:83px;width:1px;height:24px;background:#9a9a9a;"></div><div class="a" style="left:205px;top:83px;width:3px;height:1px;background:#888;"></div><div class="a" style="left:206px;top:107px;width:25px;height:1px;background:#888;"></div><div class="a" style="left:230px;top:106px;width:1px;height:3px;background:#888;"></div>
<div class="a" style="left:207.5px;top:84px;width:23px;height:23px;background:repeating-conic-gradient(from 40deg at 48% 52%,#111 0deg,#777 60deg,#fff 120deg);"></div>
<svg class="a" style="left:222px;top:80px" width="13" height="15" viewBox="0 0 13 15">
<path d="M1.5 1.5 H8 L11.5 5 V13.5 H1.5 Z" fill="#3a4a68" opacity="0.22" transform="translate(0.9,0.9)"/>
<path d="M0.5 0.5 H7.5 L10.5 3.5 V12.5 H0.5 Z" fill="url(#bg)" stroke="#7189b0" stroke-width="0.9"/>
<path d="M0.5 12.5 H10.5 V3.5" fill="none" stroke="#566c94" stroke-width="0.9"/>
<path d="M7.5 0.5 L10.5 3.5 H7.5 Z" fill="#7a92b8" stroke="#6a80a8" stroke-width="0.6"/>
<path d="M1.2 5.8 Q4 3.7 9.6 3.4" stroke="#111" stroke-width="1.25" fill="none" stroke-linecap="round"/><path d="M5.9 4 Q4.6 7.2 3 10.6" stroke="#111" stroke-width="1.6" fill="none" stroke-linecap="round"/></svg>
<div class="a" style="left:264px;top:83px;width:1px;height:24px;background:#9a9a9a;"></div><div class="a" style="left:263px;top:83px;width:3px;height:1px;background:#888;"></div><div class="a" style="left:264px;top:107px;width:25px;height:1px;background:#888;"></div><div class="a" style="left:288px;top:106px;width:1px;height:3px;background:#888;"></div>
<div class="a" style="left:265.5px;top:84px;width:23px;height:23px;background:radial-gradient(circle at 50% 55%,#888 0,#999 1.5px,#f4f4f4 3.2px,#fff 4px,#111 5.5px,#111 6.5px,rgba(0,0,0,0) 7.5px),repeating-radial-gradient(circle at 50% 55%,#444 0,#bbb 1.1px,#444 2.2px);"></div>
<svg class="a" style="left:280.5px;top:80px" width="13" height="15" viewBox="0 0 13 15">
<path d="M1.5 1.5 H8 L11.5 5 V13.5 H1.5 Z" fill="#3a4a68" opacity="0.22" transform="translate(0.9,0.9)"/>
<path d="M0.5 0.5 H7.5 L10.5 3.5 V12.5 H0.5 Z" fill="url(#bg)" stroke="#7189b0" stroke-width="0.9"/>
<path d="M0.5 12.5 H10.5 V3.5" fill="none" stroke="#566c94" stroke-width="0.9"/>
<path d="M7.5 0.5 L10.5 3.5 H7.5 Z" fill="#7a92b8" stroke="#6a80a8" stroke-width="0.6"/>
<path d="M1.2 5.8 Q4 3.7 9.6 3.4" stroke="#111" stroke-width="1.25" fill="none" stroke-linecap="round"/><path d="M5.9 4 Q4.6 7.2 3 10.6" stroke="#111" stroke-width="1.6" fill="none" stroke-linecap="round"/></svg>
<div class="a" style="left:307px;top:83px;width:1px;height:25px;background:#9a9a9a;"></div><div class="a" style="left:306px;top:83px;width:3px;height:1px;background:#888;"></div><div class="a" style="left:307px;top:108px;width:24px;height:1px;background:#888;"></div><div class="a" style="left:330px;top:107px;width:1px;height:3px;background:#888;"></div>
<div class="a" style="left:314.5px;top:89.5px;width:11px;height:11px;background:#000;"></div>
<svg class="a" style="left:322.5px;top:80px" width="13" height="15" viewBox="0 0 13 15">
<path d="M1.5 1.5 H8 L11.5 5 V13.5 H1.5 Z" fill="#3a4a68" opacity="0.22" transform="translate(0.9,0.9)"/>
<path d="M0.5 0.5 H7.5 L10.5 3.5 V12.5 H0.5 Z" fill="url(#bg)" stroke="#7189b0" stroke-width="0.9"/>
<path d="M0.5 12.5 H10.5 V3.5" fill="none" stroke="#566c94" stroke-width="0.9"/>
<path d="M7.5 0.5 L10.5 3.5 H7.5 Z" fill="#7a92b8" stroke="#6a80a8" stroke-width="0.6"/>
<path d="M1.2 5.8 Q4 3.7 9.6 3.4" stroke="#111" stroke-width="1.25" fill="none" stroke-linecap="round"/><path d="M5.9 4 Q4.6 7.2 3 10.6" stroke="#111" stroke-width="1.6" fill="none" stroke-linecap="round"/></svg>
<div class="a" style="left:366px;top:83px;width:1px;height:24px;background:#9a9a9a;"></div><div class="a" style="left:365px;top:83px;width:3px;height:1px;background:#888;"></div><div class="a" style="left:366px;top:107px;width:25px;height:1px;background:#888;"></div><div class="a" style="left:390px;top:106px;width:1px;height:3px;background:#888;"></div>
<svg class="a" style="left:367.8px;top:83.9px" width="23" height="23" viewBox="0 0 23 23">
<defs><clipPath id="zc"><circle cx="11.5" cy="11.5" r="11.8"/></clipPath></defs>
<rect width="23" height="23" fill="#000"/>
<g clip-path="url(#zc)">
<rect width="23" height="23" fill="#8c8c8c"/>
<path d="M0 14 Q11 8 23 14 M0 17 Q11 11 23 17 M0 20 Q11 14 23 20 M0 23 Q11 17 23 23" stroke="#c8c8c8" stroke-width="0.9" fill="none"/>
<path d="M0 15.5 Q11 9.5 23 15.5 M0 18.5 Q11 12.5 23 18.5 M0 21.5 Q11 15.5 23 21.5" stroke="#505050" stroke-width="0.8" fill="none"/>
<circle cx="4.3" cy="6" r="5.5" fill="#303030"/>
<path d="M6 1.5 A4.2 4.2 0 1 1 1.5 9" stroke="#fff" stroke-width="1.8" fill="none"/>
<path d="M9 0 Q11 8 6 12.5 Q3 14 0 13" stroke="#fff" stroke-width="1.5" fill="none"/>
<path d="M11 0 Q13 9 9 14.5 Q6 17 2 17" stroke="#222" stroke-width="1.2" fill="none"/>
<path d="M13 0 Q15 10 11 16 Q10 19 11 23" stroke="#fff" stroke-width="1.4" fill="none"/>
<path d="M16 0 Q15 10 18 14 Q20 16 23 14" stroke="#fff" stroke-width="1.3" fill="none"/>
<path d="M14.5 23 Q14 18 19 15.5" stroke="#eee" stroke-width="1.2" fill="none"/>
<path d="M12.5 23 Q12 17 17 14" stroke="#222" stroke-width="1" fill="none"/>
<circle cx="4" cy="5.8" r="1.8" fill="#181818"/>
</g></svg>
<svg class="a" style="left:382.5px;top:80px" width="13" height="15" viewBox="0 0 13 15">
<path d="M1.5 1.5 H8 L11.5 5 V13.5 H1.5 Z" fill="#3a4a68" opacity="0.22" transform="translate(0.9,0.9)"/>
<path d="M0.5 0.5 H7.5 L10.5 3.5 V12.5 H0.5 Z" fill="url(#bg)" stroke="#7189b0" stroke-width="0.9"/>
<path d="M0.5 12.5 H10.5 V3.5" fill="none" stroke="#566c94" stroke-width="0.9"/>
<path d="M7.5 0.5 L10.5 3.5 H7.5 Z" fill="#7a92b8" stroke="#6a80a8" stroke-width="0.6"/>
<path d="M1.2 5.8 Q4 3.7 9.6 3.4" stroke="#111" stroke-width="1.25" fill="none" stroke-linecap="round"/><path d="M5.9 4 Q4.6 7.2 3 10.6" stroke="#111" stroke-width="1.6" fill="none" stroke-linecap="round"/></svg>
<div class="a" style="left:448.7px;top:83.6px;width:23.5px;height:25px;background:repeating-linear-gradient(70deg,#fff 0px,#fff 0.8px,#000 3.4px,#000 4px,#fff 6.6px,#fff 7.4px);"></div>
<div class="a" style="left:448.2px;top:83px;width:1px;height:26px;background:#9a9a9a;"></div><div class="a" style="left:447.2px;top:83px;width:3px;height:1px;background:#888;"></div><div class="a" style="left:448.2px;top:109px;width:24.5px;height:1px;background:#888;"></div><div class="a" style="left:471.7px;top:108px;width:1px;height:3px;background:#888;"></div>
<svg class="a" style="left:447.2px;top:95.2px" width="15" height="14.5" viewBox="0 0 15 14.5">
<rect x="0.55" y="0.55" width="13.9" height="13.4" fill="#fff" stroke="#2a2a2a" stroke-width="1.1"/>
<path d="M0.8 11 H4.3 V3.8 H9.3 V11 H14.2" fill="none" stroke="#222" stroke-width="1.05"/></svg>
<svg class="a" style="left:465px;top:80px" width="13" height="15" viewBox="0 0 13 15">
<path d="M1.5 1.5 H8 L11.5 5 V13.5 H1.5 Z" fill="#3a4a68" opacity="0.22" transform="translate(0.9,0.9)"/>
<path d="M0.5 0.5 H7.5 L10.5 3.5 V12.5 H0.5 Z" fill="url(#bg)" stroke="#7189b0" stroke-width="0.9"/>
<path d="M0.5 12.5 H10.5 V3.5" fill="none" stroke="#566c94" stroke-width="0.9"/>
<path d="M7.5 0.5 L10.5 3.5 H7.5 Z" fill="#7a92b8" stroke="#6a80a8" stroke-width="0.6"/>
<path d="M1.2 5.8 Q4 3.7 9.6 3.4" stroke="#111" stroke-width="1.25" fill="none" stroke-linecap="round"/><path d="M5.9 4 Q4.6 7.2 3 10.6" stroke="#111" stroke-width="1.6" fill="none" stroke-linecap="round"/></svg>
<div class="a" style="left:506.8px;top:83.6px;width:23.5px;height:25px;background:repeating-linear-gradient(70deg,#fff 0px,#fff 0.8px,#000 3.4px,#000 4px,#fff 6.6px,#fff 7.4px);"></div>
<div class="a" style="left:506.3px;top:83px;width:1px;height:26px;background:#9a9a9a;"></div><div class="a" style="left:505.3px;top:83px;width:3px;height:1px;background:#888;"></div><div class="a" style="left:506.3px;top:109px;width:24.5px;height:1px;background:#888;"></div><div class="a" style="left:529.8px;top:108px;width:1px;height:3px;background:#888;"></div>
<svg class="a" style="left:505.3px;top:95.2px" width="15" height="14.5" viewBox="0 0 15 14.5">
<rect x="0.55" y="0.55" width="13.9" height="13.4" fill="#fff" stroke="#2a2a2a" stroke-width="1.1"/>
<path d="M0.5 6.5 L6 10.5 V3.8 L14.5 10.2" fill="none" stroke="#222" stroke-width="1.05"/></svg>
<svg class="a" style="left:523px;top:80px" width="13" height="15" viewBox="0 0 13 15">
<path d="M1.5 1.5 H8 L11.5 5 V13.5 H1.5 Z" fill="#3a4a68" opacity="0.22" transform="translate(0.9,0.9)"/>
<path d="M0.5 0.5 H7.5 L10.5 3.5 V12.5 H0.5 Z" fill="url(#bg)" stroke="#7189b0" stroke-width="0.9"/>
<path d="M0.5 12.5 H10.5 V3.5" fill="none" stroke="#566c94" stroke-width="0.9"/>
<path d="M7.5 0.5 L10.5 3.5 H7.5 Z" fill="#7a92b8" stroke="#6a80a8" stroke-width="0.6"/>
<path d="M1.2 5.8 Q4 3.7 9.6 3.4" stroke="#111" stroke-width="1.25" fill="none" stroke-linecap="round"/><path d="M5.9 4 Q4.6 7.2 3 10.6" stroke="#111" stroke-width="1.6" fill="none" stroke-linecap="round"/></svg>
<div class="a" style="left:560.7px;top:83.6px;width:23.5px;height:25px;background:repeating-linear-gradient(70deg,#fff 0px,#fff 0.8px,#000 3.4px,#000 4px,#fff 6.6px,#fff 7.4px);"></div>
<div class="a" style="left:560.2px;top:83px;width:1px;height:26px;background:#9a9a9a;"></div><div class="a" style="left:559.2px;top:83px;width:3px;height:1px;background:#888;"></div><div class="a" style="left:560.2px;top:109px;width:24.5px;height:1px;background:#888;"></div><div class="a" style="left:583.7px;top:108px;width:1px;height:3px;background:#888;"></div>
<svg class="a" style="left:559.2px;top:95.2px" width="15" height="14.5" viewBox="0 0 15 14.5">
<rect x="0.55" y="0.55" width="13.9" height="13.4" fill="#fff" stroke="#2a2a2a" stroke-width="1.1"/>
<path d="M0.50 5.58 L1.00 6.70 L1.50 7.82 L2.00 8.86 L2.50 9.77 L3.00 10.48 L3.50 10.95 L4.00 11.14 L4.50 11.06 L5.00 10.70 L5.50 10.08 L6.00 9.24 L6.50 8.25 L7.00 7.15 L7.50 6.03 L8.00 4.95 L8.50 3.98 L9.00 3.18 L9.50 2.61 L10.00 2.30 L10.50 2.27 L11.00 2.53 L11.50 3.05 L12.00 3.80 L12.50 4.74 L13.00 5.80 L13.50 6.93" fill="none" stroke="#222" stroke-width="1.05"/></svg>
<svg class="a" style="left:577px;top:80px" width="13" height="15" viewBox="0 0 13 15">
<path d="M1.5 1.5 H8 L11.5 5 V13.5 H1.5 Z" fill="#3a4a68" opacity="0.22" transform="translate(0.9,0.9)"/>
<path d="M0.5 0.5 H7.5 L10.5 3.5 V12.5 H0.5 Z" fill="url(#bg)" stroke="#7189b0" stroke-width="0.9"/>
<path d="M0.5 12.5 H10.5 V3.5" fill="none" stroke="#566c94" stroke-width="0.9"/>
<path d="M7.5 0.5 L10.5 3.5 H7.5 Z" fill="#7a92b8" stroke="#6a80a8" stroke-width="0.6"/>
<path d="M1.2 5.8 Q4 3.7 9.6 3.4" stroke="#111" stroke-width="1.25" fill="none" stroke-linecap="round"/><path d="M5.9 4 Q4.6 7.2 3 10.6" stroke="#111" stroke-width="1.6" fill="none" stroke-linecap="round"/></svg>
<div class="a" style="left:614.5px;top:83.6px;width:23.5px;height:25px;background:repeating-linear-gradient(70deg,#fff 0px,#fff 0.8px,#000 3.4px,#000 4px,#fff 6.6px,#fff 7.4px);"></div>
<div class="a" style="left:614px;top:83px;width:1px;height:26px;background:#9a9a9a;"></div><div class="a" style="left:613px;top:83px;width:3px;height:1px;background:#888;"></div><div class="a" style="left:614px;top:109px;width:24.5px;height:1px;background:#888;"></div><div class="a" style="left:637.5px;top:108px;width:1px;height:3px;background:#888;"></div>
<svg class="a" style="left:613px;top:95.2px" width="15" height="14.5" viewBox="0 0 15 14.5">
<rect x="0.55" y="0.55" width="13.9" height="13.4" fill="#fff" stroke="#2a2a2a" stroke-width="1.1"/>
<path d="M0.8 9 L4 4 L8 10.5 L11 4.5 L14 9" fill="none" stroke="#222" stroke-width="1.05"/></svg>
<svg class="a" style="left:631px;top:80px" width="13" height="15" viewBox="0 0 13 15">
<path d="M1.5 1.5 H8 L11.5 5 V13.5 H1.5 Z" fill="#3a4a68" opacity="0.22" transform="translate(0.9,0.9)"/>
<path d="M0.5 0.5 H7.5 L10.5 3.5 V12.5 H0.5 Z" fill="url(#bg)" stroke="#7189b0" stroke-width="0.9"/>
<path d="M0.5 12.5 H10.5 V3.5" fill="none" stroke="#566c94" stroke-width="0.9"/>
<path d="M7.5 0.5 L10.5 3.5 H7.5 Z" fill="#7a92b8" stroke="#6a80a8" stroke-width="0.6"/>
<path d="M1.2 5.8 Q4 3.7 9.6 3.4" stroke="#111" stroke-width="1.25" fill="none" stroke-linecap="round"/><path d="M5.9 4 Q4.6 7.2 3 10.6" stroke="#111" stroke-width="1.6" fill="none" stroke-linecap="round"/></svg>
<div class="a" style="left:670px;top:83px;width:1px;height:23px;background:#9a9a9a;"></div><div class="a" style="left:669px;top:83px;width:3px;height:1px;background:#888;"></div><div class="a" style="left:670px;top:106px;width:25px;height:1px;background:#888;"></div><div class="a" style="left:694px;top:105px;width:1px;height:3px;background:#888;"></div>
<svg class="a" style="left:671.5px;top:83.5px" width="22" height="22"><rect width="22" height="22" fill="#1a1a1a"/><path d="M10.5 4 L17 10.5 L10.5 17 L4 10.5 Z" fill="#fff"/></svg>
<svg class="a" style="left:684.5px;top:81.5px" width="13" height="15" viewBox="0 0 13 15">
<path d="M1.5 1.5 H8 L11.5 5 V13.5 H1.5 Z" fill="#3a4a68" opacity="0.22" transform="translate(0.9,0.9)"/>
<path d="M0.5 0.5 H7.5 L10.5 3.5 V12.5 H0.5 Z" fill="url(#bg)" stroke="#7189b0" stroke-width="0.9"/>
<path d="M0.5 12.5 H10.5 V3.5" fill="none" stroke="#566c94" stroke-width="0.9"/>
<path d="M7.5 0.5 L10.5 3.5 H7.5 Z" fill="#7a92b8" stroke="#6a80a8" stroke-width="0.6"/>
<path d="M2.6 10.2 L4.1 3.4 H6.9 Q8.9 3.4 8.5 5.3 Q8.1 7 6 7 H3.6 M5.9 7 L7.3 10.2" stroke="#111" stroke-width="1.15" fill="none"/></svg>
<svg class="a" style="left:709px;top:82px" width="26" height="26" viewBox="0 0 26 26">
<path d="M1.5 1 V23 M0 1.5 H3 M1 22.5 H25 M24.5 21 V25" stroke="#777" stroke-width="1" fill="none"/>
<path d="M2 22.5 H7.5 V6.5 H17 V22.5 H24" stroke="#333" stroke-width="1.3" fill="none"/></svg>
<svg class="a" style="left:724px;top:81.5px" width="13" height="15" viewBox="0 0 13 15">
<path d="M1.5 1.5 H8 L11.5 5 V13.5 H1.5 Z" fill="#3a4a68" opacity="0.22" transform="translate(0.9,0.9)"/>
<path d="M0.5 0.5 H7.5 L10.5 3.5 V12.5 H0.5 Z" fill="url(#bg)" stroke="#7189b0" stroke-width="0.9"/>
<path d="M0.5 12.5 H10.5 V3.5" fill="none" stroke="#566c94" stroke-width="0.9"/>
<path d="M7.5 0.5 L10.5 3.5 H7.5 Z" fill="#7a92b8" stroke="#6a80a8" stroke-width="0.6"/>
<path d="M2.6 10.2 L4.1 3.4 H6.9 Q8.9 3.4 8.5 5.3 Q8.1 7 6 7 H3.6 M5.9 7 L7.3 10.2" stroke="#111" stroke-width="1.15" fill="none"/></svg>
<div class="a" style="left:9.5px;top:197.4px;width:264.5px;height:263.3px;box-sizing:border-box;border:1px solid #6f86a6;border-top-color:#9a9a9a;background:linear-gradient(#c2d4ec,#aac2e2 13px,#bcd1ea 13.5px);border-radius:2px 2px 0 0;"></div>
<div class="a" style="left:14.5px;top:202.4px;width:6px;height:6px;background:#111;"></div><div class="a" style="left:16.0px;top:203.9px;width:3px;height:3px;background:#fff;border-radius:50%;"></div>
<div class="t sm" style="top:203.44px;font-size:5.15px;line-height:5.15px;color:#1a1a40;left:22.00px;">41: 2D Region 'Elliptic Region'</div>
<div class="a" style="left:225.5px;top:201.70000000000002px;width:13.5px;height:7.3px;box-sizing:border-box;border:1px solid #8498b4;background:linear-gradient(#d8e4f2,#c0d2e8 50%,#a8bedc 51%,#b8cce6);border-radius:1px;"></div>
<div class="a" style="left:241.0px;top:201.70000000000002px;width:13.0px;height:7.3px;box-sizing:border-box;border:1px solid #8498b4;background:linear-gradient(#d8e4f2,#c0d2e8 50%,#a8bedc 51%,#b8cce6);border-radius:1px;"></div>
<div class="a" style="left:255.5px;top:201.70000000000002px;width:14.0px;height:7.3px;box-sizing:border-box;border:1px solid #a04030;background:linear-gradient(#e8a090,#d05540 50%,#c03a22 51%,#b83520);border-radius:1px;"></div>
<svg class="a" style="left:260.0px;top:203.35000000000002px" width="5" height="4"><path d="M0.8 0.5 L4.2 3.5 M4.2 0.5 L0.8 3.5" stroke="#fff" stroke-width="1.1"/></svg>
<div class="a" style="left:230.0px;top:205.4px;width:4.0px;height:1.5px;background:#7a8aa0;border-radius:1px;"></div>
<div class="a" style="left:245.5px;top:203.20000000000002px;width:3.5px;height:3.0px;border:1px solid #8090a8;"></div>
<div class="a" style="left:13.0px;top:210.4px;width:257.0px;height:9.3px;background:#eef9ba;border-bottom:1px solid #a0a090;"></div>
<div class="t sm" style="top:212.84px;font-size:4.92px;line-height:4.92px;color:#333;left:-8.60px;width:300px;text-align:center;">2D Region (Continuous)</div>
<div class="a" style="left:13.0px;top:220.70000000000002px;width:257.0px;height:236.8px;background:#f0f0f0;border-left:1px solid #8a8a8a;box-sizing:border-box;"></div>
<svg class="a" style="left:0;top:0" width="280" height="470" viewBox="0 0 280 470">
<rect x="44.5" y="251.8" width="221.10000000000002" height="147.7" fill="#000"/>
<ellipse cx="155.05" cy="325.65" rx="110.55000000000001" ry="73.85" fill="#fff"/>
<path d="M44.0 251.8 V400.0 H265.6" stroke="#000" stroke-width="1" fill="none"/>
<path d="M41.5 251.8 H44.5 M41.5 400.5 H44.5 M44.5 399.5 V403.5 M265.6 399.5 V403.5" stroke="#000" stroke-width="1"/>
<path d="M42.5 280.5 H44.5" stroke="#000" stroke-width="0.8"/><text x="0" y="0" transform="translate(39.5 280.5) rotate(-90)" font-family="Liberation Sans" font-size="5.8" text-anchor="middle" fill="#333">50</text><path d="M42.5 326.5 H44.5" stroke="#000" stroke-width="0.8"/><text x="0" y="0" transform="translate(39.5 326.5) rotate(-90)" font-family="Liberation Sans" font-size="5.8" text-anchor="middle" fill="#333">0</text><path d="M42.5 371.5 H44.5" stroke="#000" stroke-width="0.8"/><text x="0" y="0" transform="translate(39.5 371.5) rotate(-90)" font-family="Liberation Sans" font-size="5.8" text-anchor="middle" fill="#333">-50</text><path d="M62.8 399.5 V401.5" stroke="#000" stroke-width="0.8"/><text x="62.8" y="409.6" font-family="Liberation Sans" font-size="6" text-anchor="middle" fill="#333">-0.15</text><path d="M108.7 399.5 V401.5" stroke="#000" stroke-width="0.8"/><text x="108.7" y="409.6" font-family="Liberation Sans" font-size="6" text-anchor="middle" fill="#333">-0.1</text><path d="M154.6 399.5 V401.5" stroke="#000" stroke-width="0.8"/><text x="154.6" y="409.6" font-family="Liberation Sans" font-size="6" text-anchor="middle" fill="#333">-0.05</text><path d="M200.5 399.5 V401.5" stroke="#000" stroke-width="0.8"/><text x="200.5" y="409.6" font-family="Liberation Sans" font-size="6" text-anchor="middle" fill="#333">0</text><path d="M246.4 399.5 V401.5" stroke="#000" stroke-width="0.8"/><text x="246.4" y="409.6" font-family="Liberation Sans" font-size="6" text-anchor="middle" fill="#333">0.05</text><text x="154.8" y="419.5" font-family="Liberation Sans" font-size="6" text-anchor="middle" fill="#333">X [mm]</text><text transform="translate(30 326) rotate(-90)" font-family="Liberation Sans" font-size="6" text-anchor="middle" fill="#333">Y [µm]</text></svg>
<div class="a" style="left:10.3px;top:495.3px;width:250.2px;height:250px;box-sizing:border-box;border:1px solid #6f86a6;border-top-color:#9a9a9a;background:linear-gradient(#c2d4ec,#aac2e2 13px,#bcd1ea 13.5px);border-radius:2px 2px 0 0;"></div>
<div class="a" style="left:15.3px;top:500.3px;width:6px;height:6px;background:#111;"></div><div class="a" style="left:16.8px;top:501.8px;width:3px;height:3px;background:#fff;border-radius:50%;"></div>
<div class="t sm" style="top:501.63px;font-size:4.81px;line-height:4.81px;color:#1a1a40;left:22.80px;">42: 2D Region 'Rectangular Region'</div>
<div class="a" style="left:215.88px;top:499.6px;width:12.42px;height:6.716px;box-sizing:border-box;border:1px solid #8498b4;background:linear-gradient(#d8e4f2,#c0d2e8 50%,#a8bedc 51%,#b8cce6);border-radius:1px;"></div>
<div class="a" style="left:230.14px;top:499.6px;width:11.96px;height:6.716px;box-sizing:border-box;border:1px solid #8498b4;background:linear-gradient(#d8e4f2,#c0d2e8 50%,#a8bedc 51%,#b8cce6);border-radius:1px;"></div>
<div class="a" style="left:243.48px;top:499.6px;width:12.88px;height:6.716px;box-sizing:border-box;border:1px solid #a04030;background:linear-gradient(#e8a090,#d05540 50%,#c03a22 51%,#b83520);border-radius:1px;"></div>
<svg class="a" style="left:247.42px;top:500.958px" width="5" height="4"><path d="M0.8 0.5 L4.2 3.5 M4.2 0.5 L0.8 3.5" stroke="#fff" stroke-width="1.1"/></svg>
<div class="a" style="left:220.01999999999998px;top:502.66px;width:3.68px;height:1.5px;background:#7a8aa0;border-radius:1px;"></div>
<div class="a" style="left:234.28px;top:501.1px;width:3.22px;height:2.7600000000000002px;border:1px solid #8090a8;"></div>
<div class="a" style="left:13.8px;top:508.3px;width:242.7px;height:9.3px;background:#eef9ba;border-bottom:1px solid #a0a090;"></div>
<div class="t sm" style="top:510.96px;font-size:4.66px;line-height:4.66px;color:#333;left:-14.20px;width:300px;text-align:center;">2D Region (Continuous)</div>
<div class="a" style="left:13.8px;top:518.6px;width:242.7px;height:223.5px;background:#f0f0f0;border-left:1px solid #8a8a8a;box-sizing:border-box;"></div>
<svg class="a" style="left:0;top:0" width="280" height="754" viewBox="0 0 280 754">
<rect x="43.4" y="529.1" width="209.6" height="174.89999999999998" fill="#000"/>
<path d="M205.5 529.1 L253 609.5 L91 704 L43.4 623.3 Z" fill="#fff"/>
<path d="M42.9 529.1 V704.5 H253" stroke="#000" stroke-width="1" fill="none"/>
<path d="M40.4 529.1 H43.4" stroke="#000" stroke-width="1"/>
<path d="M41.4 542.30 H43.4" stroke="#000" stroke-width="0.8"/><text transform="translate(38.5 542.30) rotate(-90)" font-family="Liberation Sans" font-size="5.5" text-anchor="middle" fill="#444">4</text><path d="M41.4 560.92 H43.4" stroke="#000" stroke-width="0.8"/><text transform="translate(38.5 560.92) rotate(-90)" font-family="Liberation Sans" font-size="5.5" text-anchor="middle" fill="#444">3</text><path d="M41.4 579.54 H43.4" stroke="#000" stroke-width="0.8"/><text transform="translate(38.5 579.54) rotate(-90)" font-family="Liberation Sans" font-size="5.5" text-anchor="middle" fill="#444">2</text><path d="M41.4 598.16 H43.4" stroke="#000" stroke-width="0.8"/><text transform="translate(38.5 598.16) rotate(-90)" font-family="Liberation Sans" font-size="5.5" text-anchor="middle" fill="#444">1</text><path d="M41.4 616.78 H43.4" stroke="#000" stroke-width="0.8"/><text transform="translate(38.5 616.78) rotate(-90)" font-family="Liberation Sans" font-size="5.5" text-anchor="middle" fill="#444">0</text><path d="M41.4 635.40 H43.4" stroke="#000" stroke-width="0.8"/><text transform="translate(38.5 635.40) rotate(-90)" font-family="Liberation Sans" font-size="5.5" text-anchor="middle" fill="#444">-1</text><path d="M41.4 654.02 H43.4" stroke="#000" stroke-width="0.8"/><text transform="translate(38.5 654.02) rotate(-90)" font-family="Liberation Sans" font-size="5.5" text-anchor="middle" fill="#444">-2</text><path d="M41.4 672.64 H43.4" stroke="#000" stroke-width="0.8"/><text transform="translate(38.5 672.64) rotate(-90)" font-family="Liberation Sans" font-size="5.5" text-anchor="middle" fill="#444">-3</text><path d="M41.4 691.26 H43.4" stroke="#000" stroke-width="0.8"/><text transform="translate(38.5 691.26) rotate(-90)" font-family="Liberation Sans" font-size="5.5" text-anchor="middle" fill="#444">-4</text><path d="M55.60 704 V706" stroke="#000" stroke-width="0.8"/><text x="55.60" y="713.5" font-family="Liberation Sans" font-size="5.5" text-anchor="middle" fill="#444">-5</text><path d="M74.20 704 V706" stroke="#000" stroke-width="0.8"/><text x="74.20" y="713.5" font-family="Liberation Sans" font-size="5.5" text-anchor="middle" fill="#444">-4</text><path d="M92.80 704 V706" stroke="#000" stroke-width="0.8"/><text x="92.80" y="713.5" font-family="Liberation Sans" font-size="5.5" text-anchor="middle" fill="#444">-3</text><path d="M111.40 704 V706" stroke="#000" stroke-width="0.8"/><text x="111.40" y="713.5" font-family="Liberation Sans" font-size="5.5" text-anchor="middle" fill="#444">-2</text><path d="M130.00 704 V706" stroke="#000" stroke-width="0.8"/><text x="130.00" y="713.5" font-family="Liberation Sans" font-size="5.5" text-anchor="middle" fill="#444">-1</text><path d="M148.60 704 V706" stroke="#000" stroke-width="0.8"/><text x="148.60" y="713.5" font-family="Liberation Sans" font-size="5.5" text-anchor="middle" fill="#444">0</text><path d="M167.20 704 V706" stroke="#000" stroke-width="0.8"/><text x="167.20" y="713.5" font-family="Liberation Sans" font-size="5.5" text-anchor="middle" fill="#444">1</text><path d="M185.80 704 V706" stroke="#000" stroke-width="0.8"/><text x="185.80" y="713.5" font-family="Liberation Sans" font-size="5.5" text-anchor="middle" fill="#444">2</text><path d="M204.40 704 V706" stroke="#000" stroke-width="0.8"/><text x="204.40" y="713.5" font-family="Liberation Sans" font-size="5.5" text-anchor="middle" fill="#444">3</text><path d="M223.00 704 V706" stroke="#000" stroke-width="0.8"/><text x="223.00" y="713.5" font-family="Liberation Sans" font-size="5.5" text-anchor="middle" fill="#444">4</text><path d="M241.60 704 V706" stroke="#000" stroke-width="0.8"/><text x="241.60" y="713.5" font-family="Liberation Sans" font-size="5.5" text-anchor="middle" fill="#444">5</text><text x="147.8" y="722.5" font-family="Liberation Sans" font-size="5.8" text-anchor="middle" fill="#444">X [mm]</text><text transform="translate(29 617) rotate(-90)" font-family="Liberation Sans" font-size="5.8" text-anchor="middle" fill="#444">Y [mm]</text></svg>
<div class="dl"><div class="a" style="left:287.3px;top:337.2px;width:517.0px;height:358.09999999999997px;box-sizing:border-box;border:1px solid #8c8c8c;background:#f0f0f0;border-radius:5px 5px 2px 2px;overflow:hidden;"><div style="height:20.5px;background:#fff;"></div></div>
<div class="t" style="top:343.57px;font-size:9.25px;line-height:9.25px;color:#1a1a1a;left:290.80px;">Create New 2D Region</div>
<svg class="a" style="left:786px;top:343px" width="11" height="11"><path d="M1.5 1.5 L9.5 9.5 M9.5 1.5 L1.5 9.5" stroke="#222" stroke-width="1.1"/></svg>
<div class="a" style="left:297.5px;top:368px;width:298.5px;height:289px;box-sizing:border-box;border-top:1.5px solid #8a8a8a;border-left:1.5px solid #8a8a8a;"></div>
<div class="a" style="left:297.5px;top:368px;width:498.5px;height:289.3px;box-sizing:border-box;border:1.5px solid #8a8a8a;border-right:1.6px solid #8a8a8a;"></div>
<div class="t" style="top:379.29px;font-size:8.75px;line-height:8.75px;color:#2a2a2a;left:303.30px;">Region Type</div>
<div class="a" style="left:361.6px;top:375px;width:108.8px;height:16px;background:#fff;box-sizing:border-box;border:1px solid #dcdcdc;border-bottom:1px solid #b0b0b0;border-radius:2px;"></div>
<div class="t" style="top:378.67px;font-size:8.9px;line-height:8.9px;color:#1a1a1a;left:365.10px;">Elliptic Region</div>
<svg class="a" style="left:456.90000000000003px;top:380.0px" width="8" height="6"><path d="M1 1.2 L4 4.2 L7 1.2" stroke="#666" stroke-width="0.9" fill="none"/></svg>
<div class="a" style="left:508.8px;top:378.4px;width:10px;height:10px;box-sizing:border-box;border:1.3px solid #7a7a7a;border-radius:2px;background:#f4f4f4;"></div>
<div class="t" style="top:379.51px;font-size:8.85px;line-height:8.85px;color:#2a2a2a;left:522.40px;">Spectral Domain</div>
<div class="t" style="top:376.04px;font-size:8.7px;line-height:8.7px;color:#2a2a2a;left:623.00px;">Region Name</div>
<div class="a" style="left:680px;top:371.8px;width:108.5px;height:16.6px;background:#fff;box-sizing:border-box;border:1px solid #ececec;border-bottom:1.3px solid #a0a0a0;"></div>
<div class="t" style="top:375.82px;font-size:8.8px;line-height:8.8px;color:#2a2a2a;left:682.00px;">Elliptic Region</div>
<div class="a" style="left:302.6px;top:429.8px;width:287px;height:90px;box-sizing:border-box;border:1px solid #d4d4d4;border-radius:1px;"></div>
<div class="a" style="left:307px;top:424px;width:128px;height:10px;background:#f0f0f0;"></div>
<div class="t" style="top:425.53px;font-size:9.3px;line-height:9.3px;color:#1a1a1a;left:309.00px;-webkit-text-stroke:0.25px #1a1a1a;">Definition of Unrotated Ellipse</div>
<div class="t" style="top:444.87px;font-size:8.9px;line-height:8.9px;color:#2a2a2a;left:312.00px;">Center X</div>
<div class="a" style="left:361.3px;top:440.8px;width:77px;height:14.8px;background:#fff;box-sizing:border-box;border:1px solid #ececec;border-bottom:1.3px solid #a0a0a0;"></div>
<div class="t" style="top:443.92px;font-size:8.8px;line-height:8.8px;color:#2a2a2a;left:136.30px;width:300px;text-align:right;">0 mm</div>
<div class="t" style="top:444.67px;font-size:8.9px;line-height:8.9px;color:#2a2a2a;left:451.00px;">Center Y</div>
<div class="a" style="left:500px;top:440.8px;width:77px;height:14.8px;background:#fff;box-sizing:border-box;border:1px solid #ececec;border-bottom:1.3px solid #a0a0a0;"></div>
<div class="t" style="top:443.92px;font-size:8.8px;line-height:8.8px;color:#2a2a2a;left:275.00px;width:300px;text-align:right;">0 mm</div>
<div class="t" style="top:465.87px;font-size:8.9px;line-height:8.9px;color:#2a2a2a;left:312.00px;">Half Axis X</div>
<div class="a" style="left:361.3px;top:461.7px;width:77px;height:14.8px;background:#fff;box-sizing:border-box;border:1px solid #ececec;border-bottom:1.3px solid #a0a0a0;"></div>
<div class="t" style="top:464.82px;font-size:8.8px;line-height:8.8px;color:#2a2a2a;left:136.30px;width:300px;text-align:right;">5 mm</div>
<div class="t" style="top:465.67px;font-size:8.9px;line-height:8.9px;color:#2a2a2a;left:451.00px;">Half Axis Y</div>
<div class="a" style="left:500px;top:461.7px;width:77px;height:14.8px;background:#fff;box-sizing:border-box;border:1px solid #ececec;border-bottom:1.3px solid #a0a0a0;"></div>
<div class="t" style="top:464.82px;font-size:8.8px;line-height:8.8px;color:#2a2a2a;left:275.00px;width:300px;text-align:right;">2.5 mm</div>
<div class="a" style="left:416.5px;top:485.5px;width:10px;height:10px;box-sizing:border-box;border:1.3px solid #7a7a7a;border-radius:2px;background:#f4f4f4;"></div>
<div class="t" style="top:486.19px;font-size:8.75px;line-height:8.75px;color:#2a2a2a;left:429.80px;">Keep Aspect Ratio</div>
<div class="t" style="top:505.55px;font-size:8.8px;line-height:8.8px;color:#2a2a2a;left:510.00px;">Validity:</div>
<svg class="a" style="left:544px;top:504px" width="12" height="12"><circle cx="6" cy="6" r="5.6" fill="#2ea043"/><path d="M3.2 6.2 L5.2 8.3 L8.9 3.9" stroke="#fff" stroke-width="1.6" fill="none"/></svg>
<div class="t" style="top:534.20px;font-size:9.1px;line-height:9.1px;color:#2a2a2a;left:363.00px;">Rotation Angle</div>
<div class="a" style="left:427px;top:531px;width:77px;height:14.5px;background:#fff;box-sizing:border-box;border:1px solid #ececec;border-bottom:1.3px solid #a0a0a0;"></div>
<div class="t" style="top:533.97px;font-size:8.8px;line-height:8.8px;color:#2a2a2a;left:202.00px;width:300px;text-align:right;">0°</div>
<div class="a" style="left:595.6px;top:420.2px;width:195.4px;height:197.3px;box-sizing:border-box;border-top:2px solid #7a7a7a;border-left:2px solid #7a7a7a;border-right:1px solid #e4e4e4;border-bottom:1px solid #e4e4e4;"></div>
<svg class="a" style="left:0;top:0" width="814" height="754" viewBox="0 0 814 754"><rect x="652" y="461" width="131.5" height="67" fill="#000"/><ellipse cx="718.25" cy="494.5" rx="65.25" ry="32.5" fill="#fff"/><path d="M651.3 460 V529 H784.5" stroke="#000" stroke-width="1.4" fill="none"/><path d="M648 460 H652 M648 529 H652 M652 528 V533 M784.0 528 V533" stroke="#000" stroke-width="1.4"/><path d="M666 528 V531" stroke="#000" stroke-width="1"/><text x="665.5" y="546.6" font-family="Liberation Sans" font-size="10.5" text-anchor="middle" fill="#333">-4</text><path d="M693 528 V531" stroke="#000" stroke-width="1"/><text x="692.5" y="546.6" font-family="Liberation Sans" font-size="10.5" text-anchor="middle" fill="#333">-2</text><path d="M718 528 V531" stroke="#000" stroke-width="1"/><text x="717.5" y="546.6" font-family="Liberation Sans" font-size="10.5" text-anchor="middle" fill="#333">0</text><path d="M744 528 V531" stroke="#000" stroke-width="1"/><text x="743.5" y="546.6" font-family="Liberation Sans" font-size="10.5" text-anchor="middle" fill="#333">2</text><path d="M770 528 V531" stroke="#000" stroke-width="1"/><text x="769.5" y="546.6" font-family="Liberation Sans" font-size="10.5" text-anchor="middle" fill="#333">4</text><text x="716.5" y="565.6" font-family="Liberation Sans" font-size="10.5" text-anchor="middle" fill="#333">X [mm]</text><path d="M649 468.4 H652" stroke="#000" stroke-width="1"/><text transform="translate(642.8 468.4) rotate(-90)" font-family="Liberation Sans" font-size="10.5" text-anchor="middle" fill="#333">2</text><path d="M649 495 H652" stroke="#000" stroke-width="1"/><text transform="translate(642.8 495) rotate(-90)" font-family="Liberation Sans" font-size="10.5" text-anchor="middle" fill="#333">0</text><path d="M649 521 H652" stroke="#000" stroke-width="1"/><text transform="translate(642.8 521) rotate(-90)" font-family="Liberation Sans" font-size="10.5" text-anchor="middle" fill="#333">-2</text><text transform="translate(625.3 496) rotate(-90)" font-family="Liberation Sans" font-size="10.5" text-anchor="middle" fill="#333">Y [mm]</text></svg>
<div class="t" style="top:628.64px;font-size:9.05px;line-height:9.05px;color:#2a2a2a;left:302.70px;">Extrapolation Mode:</div>
<div class="t" style="top:640.89px;font-size:8.75px;line-height:8.75px;color:#2a2a2a;left:302.70px;">Values Outside Domain are</div>
<div class="a" style="left:417.9px;top:633px;width:186.5px;height:15.5px;background:#fff;box-sizing:border-box;border:1px solid #dcdcdc;border-bottom:1px solid #b0b0b0;border-radius:2px;"></div>
<div class="t" style="top:636.42px;font-size:8.9px;line-height:8.9px;color:#1a1a1a;left:421.40px;">Periodically Continued</div>
<svg class="a" style="left:590.9px;top:637.75px" width="8" height="6"><path d="M1 1.2 L4 4.2 L7 1.2" stroke="#666" stroke-width="0.9" fill="none"/></svg>
<div class="a" style="left:598px;top:668px;width:57.6px;height:17.5px;box-sizing:border-box;border:1.3px solid #2f7ad8;border-bottom-color:#2f7ad8;border-radius:3px;background:#fdfdfd;"></div>
<div class="t" style="top:672.58px;font-size:9px;line-height:9px;color:#1a1a1a;left:476.80px;width:300px;text-align:center;">OK</div>
<div class="a" style="left:666px;top:668px;width:57px;height:17.5px;box-sizing:border-box;border:1px solid #d0d0d0;border-bottom-color:#b8b8b8;border-radius:3px;background:#fdfdfd;"></div>
<div class="t" style="top:672.58px;font-size:9px;line-height:9px;color:#1a1a1a;left:544.50px;width:300px;text-align:center;">Cancel</div>
<div class="a" style="left:733.8px;top:668px;width:57px;height:17.5px;box-sizing:border-box;border:1px solid #d0d0d0;border-bottom-color:#b8b8b8;border-radius:3px;background:#fdfdfd;"></div>
<div class="t" style="top:672.58px;font-size:9px;line-height:9px;color:#1a1a1a;left:612.30px;width:300px;text-align:center;">Help</div>
</div><div class="a" style="left:645.5px;top:66.5px;width:105.5px;height:105.5px;box-sizing:border-box;border:6px solid #ff0000;border-radius:17px;"></div>
<div class="a" style="left:293.2px;top:621.2px;width:339.8px;height:36.3px;box-sizing:border-box;border:6px solid #ff0000;border-radius:9px;"></div>

</body></html>
